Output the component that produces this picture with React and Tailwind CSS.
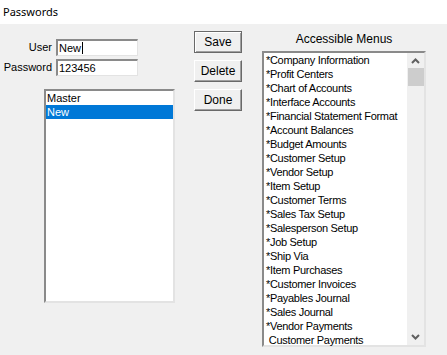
import React from "react";

const menus = [
  "*Company Information",
  "*Profit Centers",
  "*Chart of Accounts",
  "*Interface Accounts",
  "*Financial Statement Format",
  "*Account Balances",
  "*Budget Amounts",
  "*Customer Setup",
  "*Vendor Setup",
  "*Item Setup",
  "*Customer Terms",
  "*Sales Tax Setup",
  "*Salesperson Setup",
  "*Job Setup",
  "*Ship Via",
  "*Item Purchases",
  "*Customer Invoices",
  "*Payables Journal",
  "*Sales Journal",
  "*Vendor Payments",
  "\u00a0Customer Payments",
];

function Btn({ children, def }) {
  return (
    <div
      className={
        "w-[48px] h-[22px] flex items-center justify-center bg-[#f0f0f0] text-[12px] text-black " +
        (def
          ? "border border-[#696969] shadow-[inset_1px_1px_0_#fff,inset_-1px_-1px_0_#a0a0a0]"
          : "border-t border-l border-t-white border-l-white border-r border-b border-r-[#696969] border-b-[#696969] shadow-[inset_-1px_-1px_0_#a0a0a0]")
      }
    >
      {children}
    </div>
  );
}

function Input({ value, caret }) {
  return (
    <div className="w-[82px] h-[17px] bg-white border-t-2 border-l-2 border-t-[#8a8a8a] border-l-[#8a8a8a] border-r border-b border-r-[#e3e3e3] border-b-[#e3e3e3] flex items-center pl-[1px] text-[11px] leading-none text-black">
      {value}
      {caret && <span className="w-px h-[12px] bg-black ml-px" />}
    </div>
  );
}

export default function App() {
  return (
    <div
      className="w-[447px] h-[355px] bg-[#f0f0f0] flex flex-col overflow-hidden"
      style={{ fontFamily: '"Liberation Sans", Arial, sans-serif' }}
    >
      <div
        className="h-[24px] bg-white pl-[3px] pt-[4px] text-[11px] text-black"
        style={{ fontFamily: '"Noto Sans", "Liberation Sans", sans-serif' }}
      >
        Passwords
      </div>
      <div className="flex flex-1">
        {/* left column */}
        <div className="w-[194px] flex flex-col pt-[15px]">
          <div className="flex items-center h-[17px]">
            <div className="w-[56px] text-right pr-[4px] text-[11px] text-black">User</div>
            <Input value="New" caret />
          </div>
          <div className="flex items-center h-[17px] mt-[3px]">
            <div className="w-[56px] text-right pr-[4px] text-[11px] text-black">Password</div>
            <Input value="123456" />
          </div>
          <div className="ml-[44px] mt-[13px] w-[131px] h-[214px] bg-white border-t-2 border-l-2 border-t-[#8a8a8a] border-l-[#8a8a8a] border-r-2 border-b-2 border-r-[#e3e3e3] border-b-[#e3e3e3] text-[11px]">
            <div className="h-[14px] leading-[14px] pl-px text-black">Master</div>
            <div className="h-[14px] leading-[14px] pl-px bg-[#0078d7] text-white">New</div>
          </div>
        </div>
        {/* buttons */}
        <div className="w-[68px] flex flex-col pt-[7px] gap-[7px]">
          <Btn def>Save</Btn>
          <Btn>Delete</Btn>
          <Btn>Done</Btn>
        </div>
        {/* right column */}
        <div className="w-[164px] flex flex-col pt-[9px]">
          <div className="h-[18px] text-center text-[12px] text-black leading-[13px]">Accessible Menus</div>
          <div className="h-[296px] bg-white border-t-2 border-l-2 border-t-[#8a8a8a] border-l-[#8a8a8a] border-r-2 border-b-2 border-r-[#e3e3e3] border-b-[#e3e3e3] flex">
            <div className="flex-1 flex flex-col pl-[2px] text-[11px] tracking-[-0.3px] text-black">
              {menus.map((m) => (
                <div key={m} className="h-[14px] leading-[14px] whitespace-pre">
                  {m}
                </div>
              ))}
            </div>
            <div className="w-[17px] bg-[#f0f0f0] flex flex-col items-center">
              <div className="h-[15px] w-full flex items-center justify-center">
                <svg width="9" height="6" viewBox="0 0 9 6">
                  <path d="M1 5 L4.5 1.5 L8 5" stroke="#606060" strokeWidth="2" fill="none" />
                </svg>
              </div>
              <div className="w-[16px] h-[18px] bg-[#cdcdcd]" />
              <div className="flex-1" />
              <div className="h-[17px] w-full flex items-center justify-center">
                <svg width="9" height="6" viewBox="0 0 9 6">
                  <path d="M1 1 L4.5 4.5 L8 1" stroke="#606060" strokeWidth="2" fill="none" />
                </svg>
              </div>
            </div>
          </div>
        </div>
      </div>
    </div>
  );
}
